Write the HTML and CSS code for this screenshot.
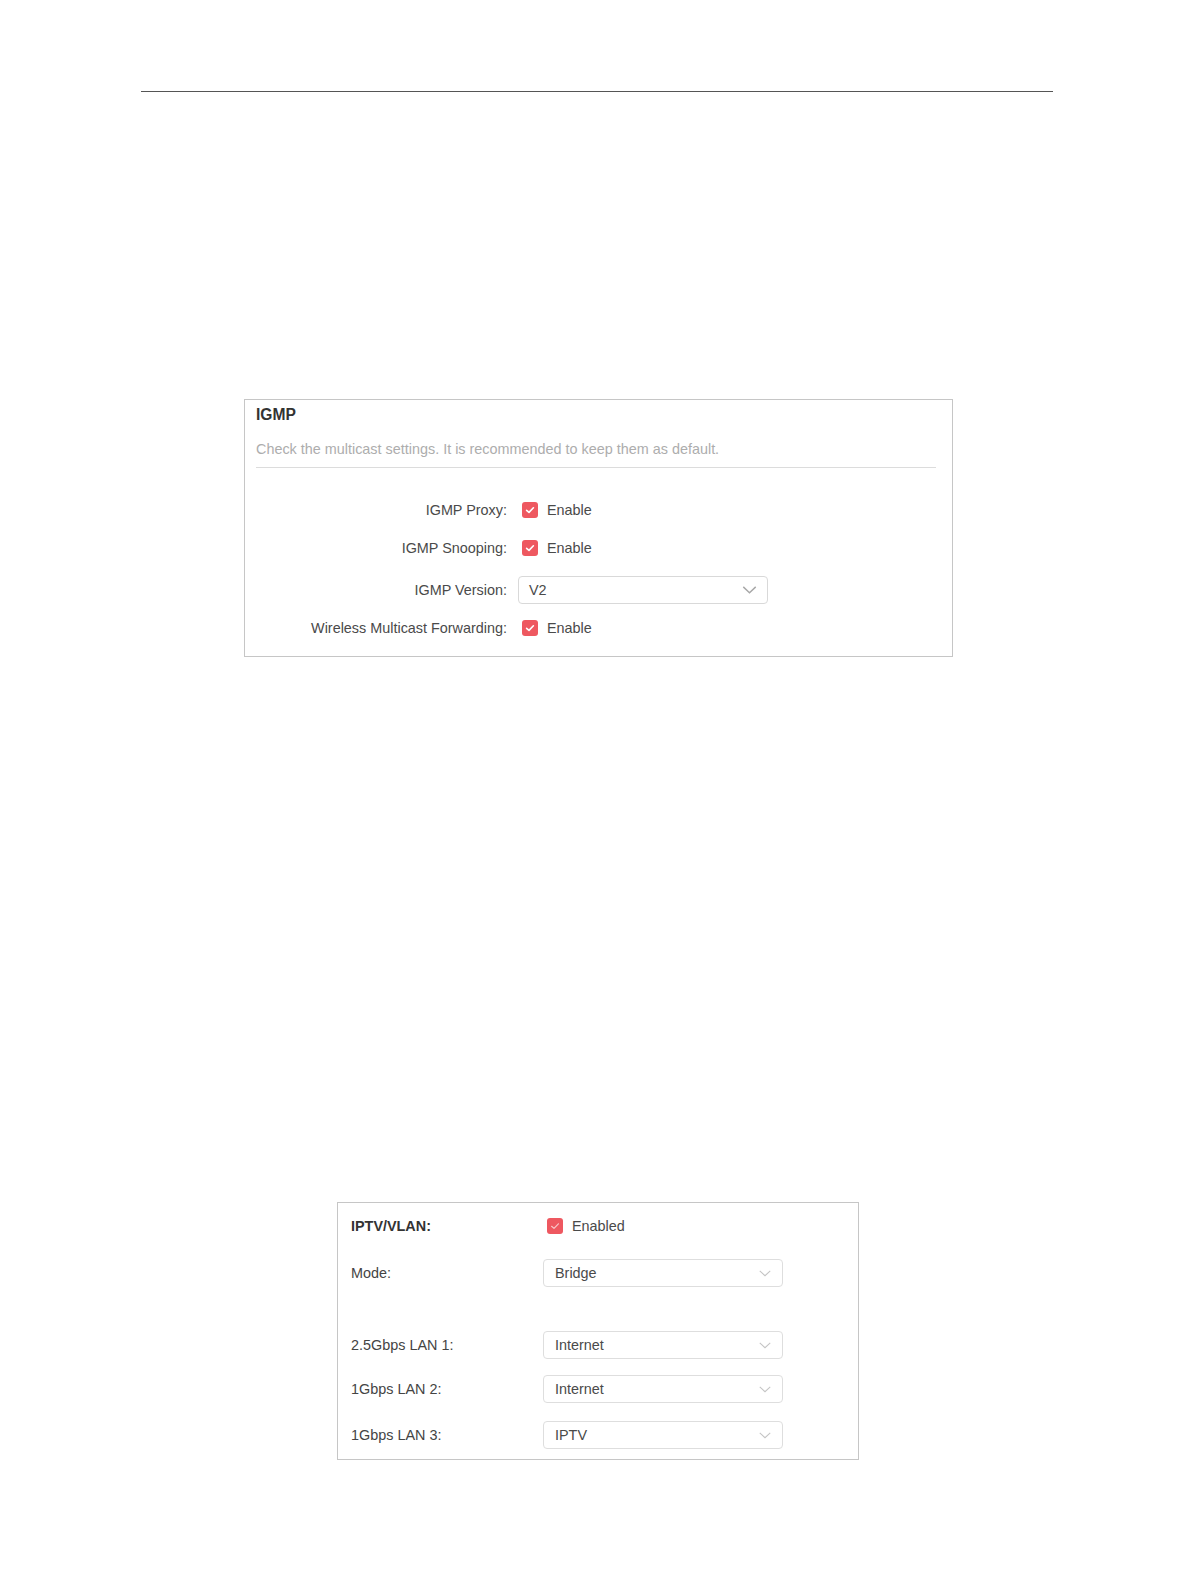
FILE: index.html
```html
<!DOCTYPE html>
<html>
<head>
  <title>IGMP and IPTV/VLAN Settings</title>
  <link rel="stylesheet" href="styles.css">
</head>
<body>
  <div class="top-rule"></div>

  <!-- IGMP settings panel -->
  <div class="panel igmp">
    <div class="panel-head">
      <div class="panel-title">IGMP</div>
      <div class="panel-desc">Check the multicast settings. It is recommended to keep them as default.</div>
    </div>
    <div class="igmp-rows">
      <div class="row">
        <div class="label">IGMP Proxy:</div>
        <label class="check">
          <span class="box"><svg viewBox="0 0 16 16"><path d="M4.6 8.3 L7 10.4 L11.4 5.8"/></svg></span>
          <span>Enable</span>
        </label>
      </div>
      <div class="row">
        <div class="label">IGMP Snooping:</div>
        <label class="check">
          <span class="box"><svg viewBox="0 0 16 16"><path d="M4.6 8.3 L7 10.4 L11.4 5.8"/></svg></span>
          <span>Enable</span>
        </label>
      </div>
      <div class="row row-select">
        <div class="label">IGMP Version:</div>
        <div class="select">
          <span>V2</span>
          <svg class="chevron" viewBox="0 0 16 9"><path d="M1 1 L8 7.5 L15 1"/></svg>
        </div>
      </div>
      <div class="row row-after">
        <div class="label">Wireless Multicast Forwarding:</div>
        <label class="check">
          <span class="box"><svg viewBox="0 0 16 16"><path d="M4.6 8.3 L7 10.4 L11.4 5.8"/></svg></span>
          <span>Enable</span>
        </label>
      </div>
    </div>
  </div>

  <!-- IPTV/VLAN settings panel -->
  <div class="panel iptv">
    <div class="iptv-row first">
      <div class="iptv-label strong">IPTV/VLAN:</div>
      <label class="check">
        <span class="box light"><svg viewBox="0 0 16 16"><path d="M4.6 8.3 L7 10.4 L11.4 5.8"/></svg></span>
        <span>Enabled</span>
      </label>
    </div>
    <div class="iptv-row mode">
      <div class="iptv-label">Mode:</div>
      <div class="select small">
        <span>Bridge</span>
        <svg class="chevron" viewBox="0 0 16 9"><path d="M1 1 L8 7.5 L15 1"/></svg>
      </div>
    </div>
    <div class="iptv-row lan1">
      <div class="iptv-label">2.5Gbps LAN 1:</div>
      <div class="select small">
        <span>Internet</span>
        <svg class="chevron" viewBox="0 0 16 9"><path d="M1 1 L8 7.5 L15 1"/></svg>
      </div>
    </div>
    <div class="iptv-row lan2">
      <div class="iptv-label">1Gbps LAN 2:</div>
      <div class="select small">
        <span>Internet</span>
        <svg class="chevron" viewBox="0 0 16 9"><path d="M1 1 L8 7.5 L15 1"/></svg>
      </div>
    </div>
    <div class="iptv-row lan3">
      <div class="iptv-label">1Gbps LAN 3:</div>
      <div class="select small">
        <span>IPTV</span>
        <svg class="chevron" viewBox="0 0 16 9"><path d="M1 1 L8 7.5 L15 1"/></svg>
      </div>
    </div>
  </div>
</body>
</html>
```

FILE: styles.css
```css
/* Page and panels */

body {
  margin: 0;
  background: #fff;
  font-family: "Liberation Sans", Arial, sans-serif;
  font-size: 14.4px;
  color: #4a4a4a;
}

.top-rule {
  margin: 91px 0 0 141px;
  width: 912px;
  border-top: 1px solid #555;
}

.panel {
  border: 1px solid #c6c6c6;
  box-sizing: border-box;
}

/* IGMP panel */

.igmp {
  margin: 307px 0 0 244px;
  width: 709px;
  padding: 5px 16px 14px 11px;
}

.panel-head {
  padding-bottom: 8px;
  border-bottom: 1px solid #dcdcdc;
}

.panel-title {
  font-size: 15.6px;
  font-weight: bold;
  line-height: 20px;
  color: #333;
}

.panel-desc {
  margin-top: 14px;
  line-height: 20px;
  color: #adadad;
}

.igmp-rows {
  display: flex;
  flex-direction: column;
  padding-top: 28px;
}

.row {
  display: flex;
  align-items: center;
  height: 28px;
  gap: 11px;
}

.row + .row {
  margin-top: 10px;
}

.row.row-select {
  margin-top: 14px;
}

.row.row-after {
  margin-top: 10px;
}

.label {
  width: 251px;
  text-align: right;
  color: #4a4a4a;
}

/* Checkbox */

.check {
  display: flex;
  align-items: center;
  gap: 9px;
  margin-left: 4px;
  color: #4a4a4a;
}

.box {
  width: 16px;
  height: 16px;
  border-radius: 3px;
  background: #ee5860;
  display: flex;
}

.box svg {
  width: 16px;
  height: 16px;
  fill: none;
  stroke: #fff;
  stroke-width: 1.6;
  stroke-linecap: round;
  stroke-linejoin: round;
}

.box.light svg {
  stroke: #f7c6c8;
  stroke-width: 1.2;
}

/* Select */

.select {
  display: flex;
  align-items: center;
  justify-content: space-between;
  box-sizing: border-box;
  width: 250px;
  height: 28px;
  padding: 0 10px 0 10px;
  border: 1px solid #d9d9d9;
  border-radius: 4px;
  color: #4a4a4a;
}

.chevron {
  width: 15px;
  height: 8px;
  fill: none;
  stroke: #a8a8a8;
  stroke-width: 1.6;
}

.select.small {
  width: 240px;
  padding: 0 11px 0 11px;
  border-color: #dedede;
}

.select.small .chevron {
  width: 12px;
  height: 7px;
  stroke: #c4c4c4;
  stroke-width: 1.4;
}

/* IPTV/VLAN panel */

.iptv {
  margin: 545px 0 0 337px;
  width: 522px;
  padding: 9px 13px 10px 13px;
  display: flex;
  flex-direction: column;
}

.iptv-row {
  display: flex;
  align-items: center;
  height: 28px;
}

.iptv-label {
  width: 192px;
  color: #444;
}

.iptv-label.strong {
  font-weight: bold;
  color: #333;
}

.iptv .check {
  margin-left: 4px;
}

.iptv-row.mode {
  margin-top: 19px;
}

.iptv-row.lan1 {
  margin-top: 44px;
}

.iptv-row.lan2 {
  margin-top: 16px;
}

.iptv-row.lan3 {
  margin-top: 18px;
}
```
